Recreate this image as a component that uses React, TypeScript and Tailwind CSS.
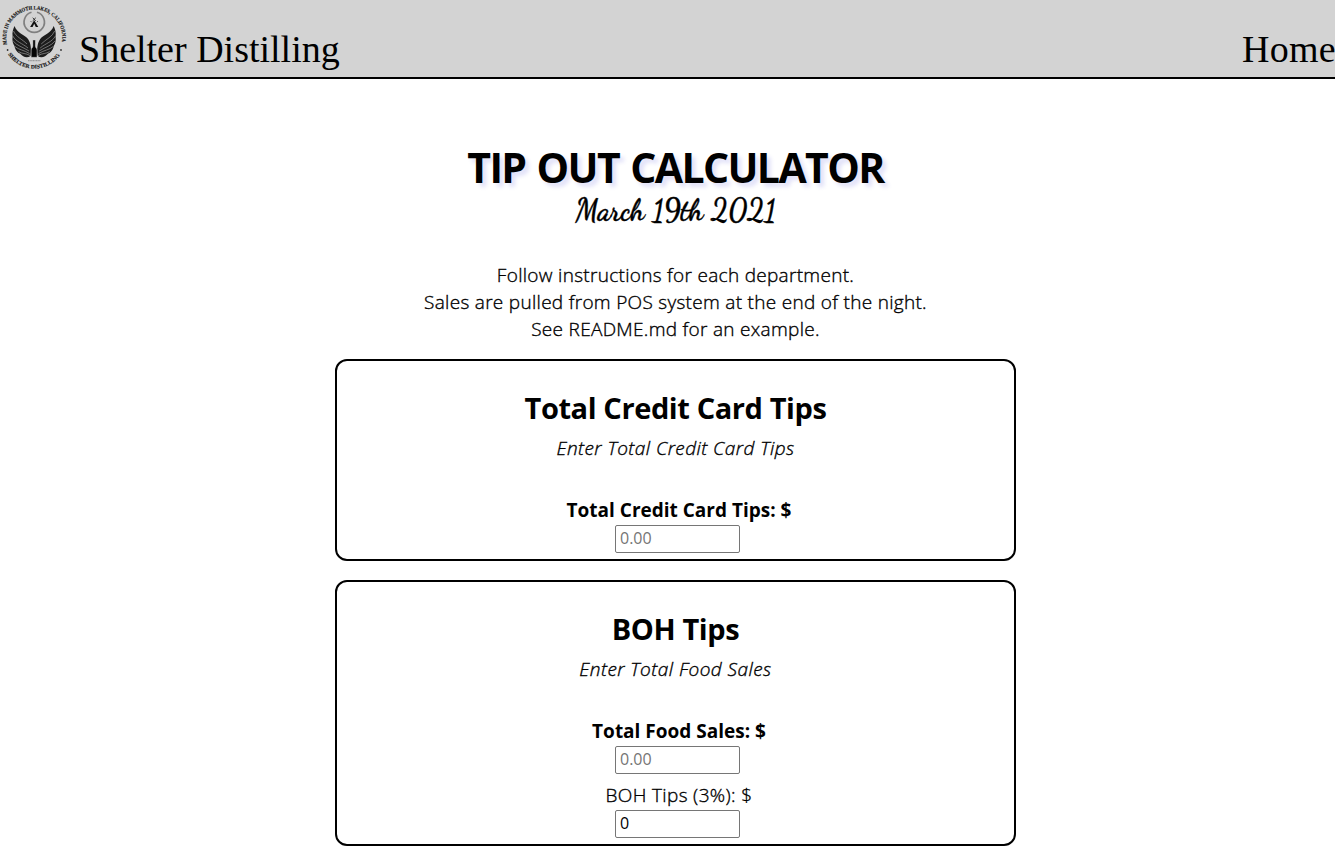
import type { ReactNode } from "react";

const wing = "M14.5 26 C13 29 12 33 12.6 36 C12 41 13 44 14.5 46 C15 50 18 53 20 53.5 C23 57 27 58.5 30.5 56 C31.5 50 31 43 28 39 C25 35 17 33 14.5 26Z";

const barbs = [
  "M13.5 31 C16 37 22 39 27 44",
  "M12.8 36 C16 42 22 43 28 48",
  "M13.2 41 C17 46 22 46.5 29 51",
  "M15 46.5 C19 50 24 50 29.5 53.5",
  "M18.5 51.5 C22 54 26 53 30 55.5",
];

function Logo() {
  return (
    <svg width="70" height="74" viewBox="0 0 70 74" className="shrink-0" aria-label="Shelter Distilling">
      <defs>
        <path id="ringTop" d="M7.2 44.5 A28 28 0 1 1 61.4 44.5" />
        <path id="ringBottom" d="M8 54.3 A31.4 31.4 0 0 0 60.6 54.3" />
      </defs>
      <g fill="#151515" stroke="#151515" strokeWidth="0.15" fontFamily="Liberation Serif, serif" fontWeight="700" fontSize="5.4">
        <text textLength="99" lengthAdjust="spacingAndGlyphs">
          <textPath href="#ringTop">MADE IN MAMMOTH LAKES, CALIFORNIA</textPath>
        </text>
        <text textLength="61" lengthAdjust="spacingAndGlyphs">
          <textPath href="#ringBottom">SHELTER DISTILLING</textPath>
        </text>
      </g>
      <circle cx="7.6" cy="50" r="0.9" fill="#333" />
      <circle cx="61" cy="50" r="0.9" fill="#333" />
      <path d="M31.5 12.3 A10.2 10.2 0 1 0 37 12.3" fill="none" stroke="#808080" strokeWidth="1.7" />
      <path d="M34.2 20.3 L38.3 27 H35.8 L34.2 23.7 L32.6 27 H30.1Z" fill="#111" />
      <path d="M32.7 17.8 L35.8 20.8 M35.8 17.8 L32.7 20.8 M30.8 21.3 L31.6 22.2 M37.7 21.3 L36.9 22.2" stroke="#222" strokeWidth="0.9" />
      <g id="wing">
        <path d={wing} fill="#1c1c1c" />
        {barbs.map((d) => (
          <path key={d} d={d} fill="none" stroke="#8a8a8a" strokeWidth="0.8" />
        ))}
      </g>
      <use href="#wing" transform="translate(68.2 0) scale(-1 1)" />
      <path d="M32.9 40 H35.3 V46 C35.3 48 37 48 37 50 V57.3 H31.2 V50 C31.2 48 32.9 48 32.9 46Z" fill="#050505" stroke="#d3d3d3" strokeWidth="0.4" />
      <path d="M28 60.6 H40.5" stroke="#999" strokeWidth="1.3" strokeDasharray="1.2 0.4" />
    </svg>
  );
}

function Card({ title, hint, children }: { title: string; hint: string; children: ReactNode }) {
  return (
    <section className="flex w-[681px] flex-col items-center rounded-xl border-2 border-black pt-[27px] pb-1.5">
      <h2 className="text-[29px] leading-10 font-bold tracking-[-0.4px] [-webkit-text-stroke:0]">{title}</h2>
      <p className="mt-[7px] mb-[35px] tracking-[0.45px] italic">{hint}</p>
      <div className="flex flex-col gap-2">{children}</div>
    </section>
  );
}

function Field({ label, bold, value }: { label: string; bold?: boolean; value?: string }) {
  return (
    <label className="flex flex-col items-center gap-px">
      <span className={bold ? "pl-[7px] font-bold tracking-normal [-webkit-text-stroke:0]" : "pl-[7px] tracking-[0.35px]"}>{label}</span>
      <input
        className="ml-1 h-7 w-[125px] rounded-[2px] border border-[#767676] bg-white px-1 pb-0.5 text-base font-normal tracking-normal outline-none [-webkit-text-stroke:0] placeholder:text-[#757575]"
        placeholder="0.00"
        defaultValue={value}
      />
    </label>
  );
}

export default function App() {
  return (
    <div className="h-[850px] w-full overflow-hidden bg-white font-['Open_Sans','Noto_Sans',sans-serif] text-[19px] leading-[27px] text-black">
      <header className="flex h-[79px] items-start border-b-2 border-black bg-[#d3d3d3] font-['Georgia','Liberation_Serif',serif] text-[38px] leading-[42px]">
        <Logo />
        <span className="mt-[28px] ml-[9px]">Shelter Distilling</span>
        <a className="mt-[28px] mr-[-1px] ml-auto tracking-[0.3px]">Home</a>
      </header>
      <main className="flex flex-col items-center pt-[61px] pl-4 text-center font-light tracking-[0.3px] [-webkit-text-stroke:0.35px_black]">
        <h1 className="text-[41px] leading-[54px] font-bold tracking-[-1.6px] [word-spacing:2px] [-webkit-text-stroke:0] [text-shadow:4px_4px_4px_rgba(0,0,200,0.12)]">
          TIP OUT CALCULATOR
        </h1>
        <p className="scale-x-90 font-['Dancing_Script',cursive] text-[32px] leading-[33px] font-bold tracking-normal">
          March 19th 2021
        </p>
        <p className="mt-[35px] mb-4">
          Follow instructions for each department.
          <br />
          Sales are pulled from POS system at the end of the night.
          <br />
          See README.md for an example.
        </p>
        <div className="flex flex-col gap-[19px]">
          <Card title="Total Credit Card Tips" hint="Enter Total Credit Card Tips">
            <Field label="Total Credit Card Tips: $" bold />
          </Card>
          <Card title="BOH Tips" hint="Enter Total Food Sales">
            <Field label="Total Food Sales: $" bold />
            <Field label="BOH Tips (3%): $" value="0" />
          </Card>
        </div>
      </main>
    </div>
  );
}
